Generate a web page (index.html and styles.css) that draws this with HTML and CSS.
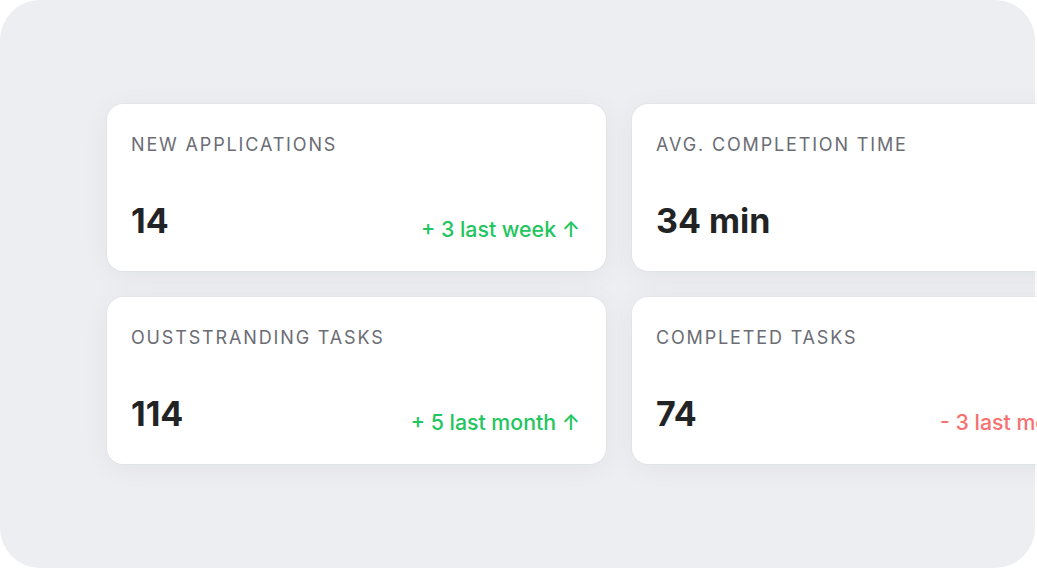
FILE: index.html
```html
<!DOCTYPE html>
<html>
<head>
<meta charset="utf-8">
<link rel="stylesheet" href="styles.css">
</head>
<body>
<div class="panel">
  <div class="grid">
    <div class="card">
      <div class="label">NEW APPLICATIONS</div>
      <div class="row">
        <div class="value">14</div>
        <div class="delta up">+ 3 last week ↑</div>
      </div>
    </div>
    <div class="card">
      <div class="label">AVG. COMPLETION TIME</div>
      <div class="row">
        <div class="value">34 min</div>
      </div>
    </div>
    <div class="card">
      <div class="label">OUSTSTRANDING TASKS</div>
      <div class="row">
        <div class="value">114</div>
        <div class="delta up">+ 5 last month ↑</div>
      </div>
    </div>
    <div class="card">
      <div class="label">COMPLETED TASKS</div>
      <div class="row">
        <div class="value">74</div>
        <div class="delta down">- 3 last month ↓</div>
      </div>
    </div>
  </div>
</div>
</body>
</html>
```
FILE: styles.css
```css
html, body {
  margin: 0;
  padding: 0;
  background: #ffffff;
  overflow: hidden;
  width: 1037px;
  height: 571px;
}
body {
  font-family: Inter, "Liberation Sans", sans-serif;
}
.panel {
  box-sizing: border-box;
  width: 1035px;
  height: 568px;
  background: #eceef1;
  border-radius: 40px;
  padding: 104px 0 0 107px;
}
.grid {
  display: grid;
  grid-template-columns: 499px 499px;
  grid-auto-rows: 167px;
  gap: 26px;
}
.card {
  background: #ffffff;
  border-radius: 16px;
  box-shadow: 0 0 0 1px rgba(0, 0, 0, 0.02), 0 4px 28px rgba(20, 30, 50, 0.05);
  padding: 30px 26px 0 24px;
  display: flex;
  flex-direction: column;
}
.label {
  font-size: 18px;
  letter-spacing: 1.85px;
  color: #6b6c74;
  font-weight: 400;
}
.row {
  margin-top: auto;
  margin-bottom: 30px;
  display: flex;
  justify-content: space-between;
  align-items: flex-end;
}
.value {
  font-size: 34px;
  font-weight: 700;
  color: #222325;
}
.delta {
  font-size: 21.3px;
  font-weight: 500;
  margin-bottom: -1px;
}
.up { color: #22c55e; }
.down { color: #f87171; }
```
